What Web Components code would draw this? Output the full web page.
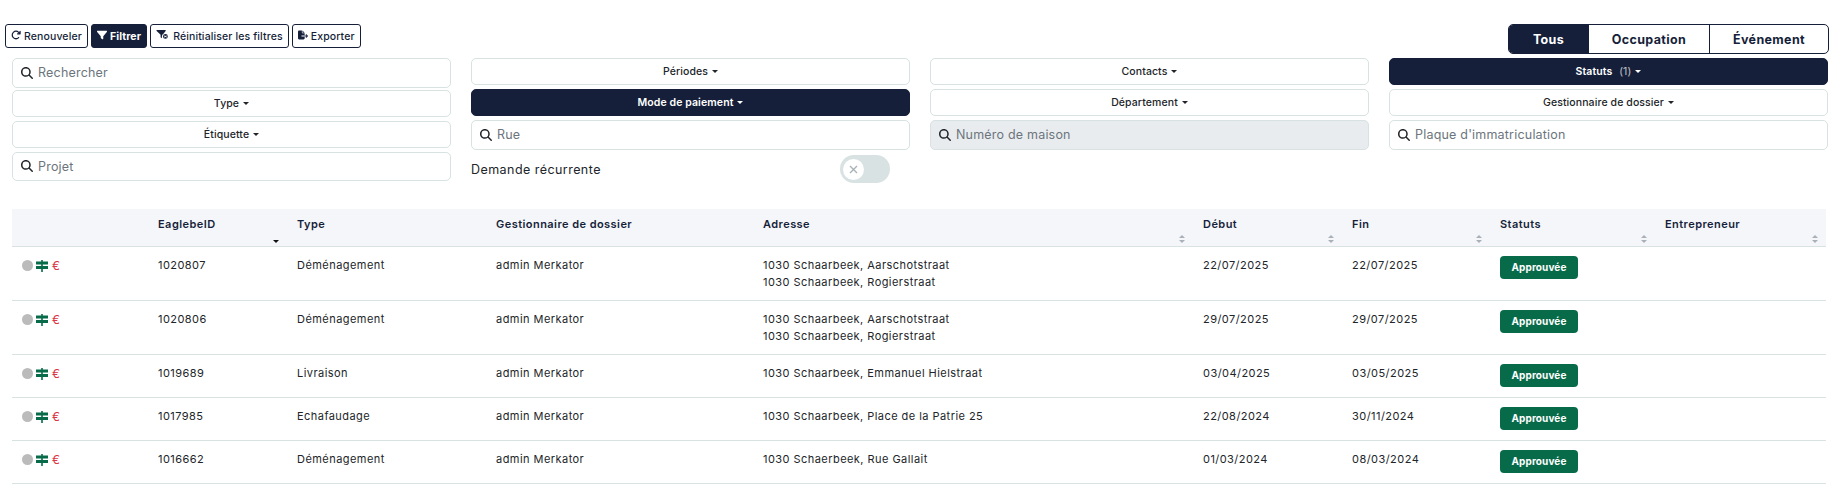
<!DOCTYPE html>
<html lang="fr">
<head>
<meta charset="utf-8">
<title>Demandes</title>
<style>
  html, body { margin: 0; background: #fff; }
  body { font-family: Inter, "Noto Sans", sans-serif; color: #212529; font-size: 12px; }
</style>
</head>
<body>
<demand-page></demand-page>
<script>
const NAVY = '#161f3a';
const ICONS = {
  search: ['0 0 512 512', 'M416 208c0 45.9-14.9 88.3-40 122.7L502.6 457.4c12.5 12.5 12.5 32.8 0 45.3s-32.8 12.5-45.3 0L330.7 376c-34.4 25.2-76.8 40-122.7 40C93.1 416 0 322.9 0 208S93.1 0 208 0S416 93.1 416 208zM208 352a144 144 0 1 0 0-288 144 144 0 1 0 0 288z'],
  filter: ['0 0 512 512', 'M3.9 54.9C10.5 40.9 24.5 32 40 32H472c15.5 0 29.5 8.9 36.1 22.9s4.6 30.5-5.2 42.5L320 320.9V448c0 12.1-6.8 23.2-17.7 28.6s-23.8 4.3-33.5-3l-64-48c-8.1-6-12.8-15.5-12.8-25.6V320.9L9 97.3C-.7 85.4-2.8 68.8 3.9 54.9z'],
  refresh: ['0 0 512 512', 'M386.3 160H336c-17.7 0-32 14.3-32 32s14.3 32 32 32H464c17.7 0 32-14.3 32-32V64c0-17.7-14.3-32-32-32s-32 14.3-32 32v51.2L414.4 97.6c-87.5-87.5-229.3-87.5-316.8 0s-87.5 229.3 0 316.8s229.3 87.5 316.8 0c12.5-12.5 12.5-32.8 0-45.3s-32.8-12.5-45.3 0c-62.5 62.5-163.8 62.5-226.3 0s-62.5-163.8 0-226.3s163.8-62.5 226.3 0L386.3 160z'],
  reset: ['0 0 640 512', 'M40 32H420c22 0 34 25 20 42L340 198a130 130 0 0 0-70 118v90L210 362V240L30 74C14 58 20 32 40 32zM430 210a110 110 0 1 1 0 220 110 110 0 1 1 0-220zM385 275l-25 25 45 20-45 25 25 25 45-30 45 30 25-25-45-25 45-20-25-25-45 25z'],
  export: ['0 0 576 512', 'M0 64C0 28.7 28.7 0 64 0H224V128c0 17.7 14.3 32 32 32H384V288H216c-13.3 0-24 10.7-24 24s10.7 24 24 24H384V448c0 35.3-28.7 64-64 64H64c-35.3 0-64-28.7-64-64V64zM384 336V288H494.1l-39-39c-9.4-9.4-9.4-24.6 0-33.9s24.6-9.4 33.9 0l80 80c9.4 9.4 9.4 24.6 0 33.9l-80 80c-9.4 9.4-24.6 9.4-33.9 0s-9.4-24.6 0-33.9l39-39H384zm0-208H256V0L384 128z'],
};
const icon = (name, size) => {
  const [box, d] = ICONS[name];
  return `<svg viewBox="${box}" width="${size}" height="${size}" fill="currentColor" aria-hidden="true"><path d="${d}"/></svg>`;
};

class ActionButton extends HTMLElement {
  constructor() {
    super();
    const name = this.getAttribute('icon');
    this.attachShadow({ mode: 'open' }).innerHTML = `
<style>
  :host {
    display: inline-flex; align-items: center; gap: 3px; height: 24px; box-sizing: border-box;
    padding: 0 5px; border: 1px solid ${NAVY}; border-radius: 3px; background: #fff;
    color: ${NAVY}; font-size: 10.5px; font-weight: 500; letter-spacing: .12px; white-space: nowrap;
  }
  :host([active]) { background: ${NAVY}; color: #fff; font-weight: 700; }
  svg { flex: none; margin-top: -2px; }
</style>
${icon(name, name === 'reset' ? 14 : 10)}<slot></slot>`;
  }
}
customElements.define('action-button', ActionButton);

class ViewTabs extends HTMLElement {
  constructor() {
    super();
    this.attachShadow({ mode: 'open' }).innerHTML = `
<style>
  :host {
    display: grid; grid-template-columns: 79px 121px 119px; height: 30px; box-sizing: border-box;
    margin-right: 6px; border: 1px solid ${NAVY}; border-radius: 5px; overflow: hidden;
    color: ${NAVY}; font-size: 12.5px; font-weight: 700; letter-spacing: .35px;
  }
  span { display: flex; align-items: center; justify-content: center; }
  span + span { border-left: 1px solid ${NAVY}; }
  .on { background: ${NAVY}; color: #fff; }
</style>
<span class="on">Tous</span><span>Occupation</span><span>Événement</span>`;
  }
}
customElements.define('view-tabs', ViewTabs);

class FilterInput extends HTMLElement {
  constructor() {
    super();
    this.attachShadow({ mode: 'open' }).innerHTML = `
<style>
  :host {
    display: flex; align-items: center; gap: 5px; height: 29.5px; box-sizing: border-box;
    margin-bottom: 2px; padding: 0 8px; border: 1px solid #d8e2e2; border-radius: 5px;
    background: #fff; color: #6c757d; font-size: 12.5px; letter-spacing: .2px;
  }
  :host([disabled]) { background: #e9ecef; }
  svg { color: #212529; flex: none; }
</style>
${icon('search', 12)}<slot></slot>`;
  }
}
customElements.define('filter-input', FilterInput);

class FilterDropdown extends HTMLElement {
  constructor() {
    super();
    this.attachShadow({ mode: 'open' }).innerHTML = `
<style>
  :host {
    display: flex; align-items: center; justify-content: center; gap: 4px; height: 27px; box-sizing: border-box;
    margin-bottom: 4px; border: 1px solid #d8e2e2; border-radius: 5px; background: #fff;
    color: #212529; font-size: 10.5px; font-weight: 500; letter-spacing: .1px;
  }
  :host([active]) { background: ${NAVY}; border-color: ${NAVY}; color: #fff; font-weight: 600; }
  i { border: 3.5px solid transparent; border-top-color: currentColor; border-bottom: 0; }
</style>
<slot></slot><i></i>`;
  }
}
customElements.define('filter-dropdown', FilterDropdown);

class ToggleRow extends HTMLElement {
  constructor() {
    super();
    this.attachShadow({ mode: 'open' }).innerHTML = `
<style>
  :host {
    display: flex; align-items: center; justify-content: space-between; height: 28px;
    margin-top: 3.5px; padding-right: 20px; color: #212529; font-size: 12.5px; letter-spacing: .45px;
  }
  .track { width: 50px; height: 28px; border-radius: 14px; background: #d8e2e2; display: flex; align-items: center; padding-left: 3px; box-sizing: border-box; }
  .knob { width: 21px; height: 21px; border-radius: 50%; background: #fff; display: grid; place-items: center; }
  svg { stroke: #a9b3b6; stroke-width: 1.4; fill: none; }
</style>
<slot></slot>
<span class="track"><span class="knob"><svg width="9" height="9" viewBox="0 0 9 9"><path d="M1 1l7 7M8 1l-7 7"/></svg></span></span>`;
  }
}
customElements.define('toggle-row', ToggleRow);

const COLUMNS = [
  { label: '', width: 136 },
  { label: 'EaglebeID', width: 139, sort: 'down' },
  { label: 'Type', width: 199 },
  { label: 'Gestionnaire de dossier', width: 267 },
  { label: 'Adresse', width: 440, sort: 'both' },
  { label: 'Début', width: 149, sort: 'both' },
  { label: 'Fin', width: 148, sort: 'both' },
  { label: 'Statuts', width: 165, sort: 'both' },
  { label: 'Entrepreneur', width: 171, sort: 'both' },
];
const ROWS = [
  ['1020807', 'Déménagement', ['1030 Schaarbeek, Aarschotstraat', '1030 Schaarbeek, Rogierstraat'], '22/07/2025', '22/07/2025'],
  ['1020806', 'Déménagement', ['1030 Schaarbeek, Aarschotstraat', '1030 Schaarbeek, Rogierstraat'], '29/07/2025', '29/07/2025'],
  ['1019689', 'Livraison', ['1030 Schaarbeek, Emmanuel Hielstraat'], '03/04/2025', '03/05/2025'],
  ['1017985', 'Echafaudage', ['1030 Schaarbeek, Place de la Patrie 25'], '22/08/2024', '30/11/2024'],
  ['1016662', 'Déménagement', ['1030 Schaerbeek, Rue Gallait'], '01/03/2024', '08/03/2024'],
];

class DemandTable extends HTMLElement {
  constructor() {
    super();
    const head = COLUMNS.map((c) => {
      let arrows = '';
      if (c.sort === 'down') arrows = '<i class="sort"><b class="dn dark"></b></i>';
      if (c.sort === 'both') arrows = '<i class="sort"><b class="up"></b><b class="dn"></b></i>';
      return `<div class="th">${c.label}${arrows}</div>`;
    }).join('');
    const body = ROWS.map((r) => `
<div class="tr">
  <div class="td flags">
    <span class="dot"></span>
    <svg width="12" height="12" viewBox="0 0 12 12" fill="#076b4a"><path d="M0 1.5h12v3H0zM0 6h12v3H0zM5.2 0h1.6v1.5H5.2zM5.2 4.5h1.6V6H5.2zM5.2 9h1.6v3H5.2z"/></svg>
    <span class="euro">€</span>
  </div>
  <div class="td">${r[0]}</div>
  <div class="td">${r[1]}</div>
  <div class="td">admin Merkator</div>
  <div class="td addr">${r[2].map((a) => `<div>${a}</div>`).join('')}</div>
  <div class="td">${r[3]}</div>
  <div class="td">${r[4]}</div>
  <div class="td"><span class="badge">Approuvée</span></div>
  <div class="td"></div>
</div>`).join('');
    const cols = COLUMNS.map((c) => c.width + 'px').join(' ');
    this.attachShadow({ mode: 'open' }).innerHTML = `
<style>
  :host { display: block; margin: 25px 9px 0 12px; color: #212529; font-size: 11px; letter-spacing: .45px; }
  .tr, .head { display: grid; grid-template-columns: ${cols}; }
  .head { height: 37px; background: #f5f6fa; border-bottom: 1px solid #d8e2e2; box-sizing: content-box; }
  .th { position: relative; padding: 8px 10px 0; font-weight: 600; color: ${NAVY}; }
  .sort { position: absolute; right: 8px; bottom: 3px; display: flex; flex-direction: column; gap: 2px; }
  .sort b { display: block; border: 3px solid transparent; }
  .sort .up { border-top: 0; border-bottom: 3.5px solid #aab0b8; }
  .sort .dn { border-bottom: 0; border-top: 3.5px solid #aab0b8; }
  .sort .dark { border-top-color: #111; }
  .tr { border-bottom: 1px solid #d8e2e2; min-height: 42px; }
  .td { padding: 10px 10px 9px; line-height: 17px; }
  .flags { display: flex; align-items: flex-start; gap: 3px; }
  .flags svg { margin-top: 2.5px; }
  .dot { width: 11px; height: 11px; margin-top: 3px; border-radius: 50%; background: #bbb; }
  .euro { color: #dc3545; font-size: 12px; letter-spacing: 0; margin-left: 1px; }
  .badge {
    display: inline-flex; align-items: center; justify-content: center; width: 78px; height: 23px; margin-top: -1px;
    border-radius: 4px; background: #076b4a; color: #fff; font-size: 10px; font-weight: 700; letter-spacing: .1px;
  }
</style>
<div class="head">${head}</div>${body}`;
  }
}
customElements.define('demand-table', DemandTable);

class DemandPage extends HTMLElement {
  constructor() {
    super();
    this.attachShadow({ mode: 'open' }).innerHTML = `
<style>
  :host { display: block; padding-top: 24px; }
  .bar { display: flex; justify-content: space-between; align-items: flex-start; padding-left: 5px; height: 34px; }
  .actions { display: flex; gap: 3px; }
  .filters { display: grid; grid-template-columns: repeat(4, 439px); column-gap: 20px; padding-left: 12px; height: 126px; }
  .col { display: flex; flex-direction: column; }
</style>
<div class="bar">
  <div class="actions">
    <action-button icon="refresh">Renouveler</action-button>
    <action-button icon="filter" active>Filtrer</action-button>
    <action-button icon="reset">Réinitialiser les filtres</action-button>
    <action-button icon="export">Exporter</action-button>
  </div>
  <view-tabs></view-tabs>
</div>
<div class="filters">
  <div class="col">
    <filter-input>Rechercher</filter-input>
    <filter-dropdown>Type</filter-dropdown>
    <filter-dropdown>Étiquette</filter-dropdown>
    <filter-input>Projet</filter-input>
  </div>
  <div class="col">
    <filter-dropdown>Périodes</filter-dropdown>
    <filter-dropdown active>Mode de paiement</filter-dropdown>
    <filter-input>Rue</filter-input>
    <toggle-row>Demande récurrente</toggle-row>
  </div>
  <div class="col">
    <filter-dropdown>Contacts</filter-dropdown>
    <filter-dropdown>Département</filter-dropdown>
    <filter-input disabled>Numéro de maison</filter-input>
  </div>
  <div class="col">
    <filter-dropdown active>Statuts&nbsp;<span style="font-weight:400;opacity:.7">(1)</span></filter-dropdown>
    <filter-dropdown>Gestionnaire de dossier</filter-dropdown>
    <filter-input>Plaque d'immatriculation</filter-input>
  </div>
</div>
<demand-table></demand-table>`;
  }
}
customElements.define('demand-page', DemandPage);
</script>
</body>
</html>
